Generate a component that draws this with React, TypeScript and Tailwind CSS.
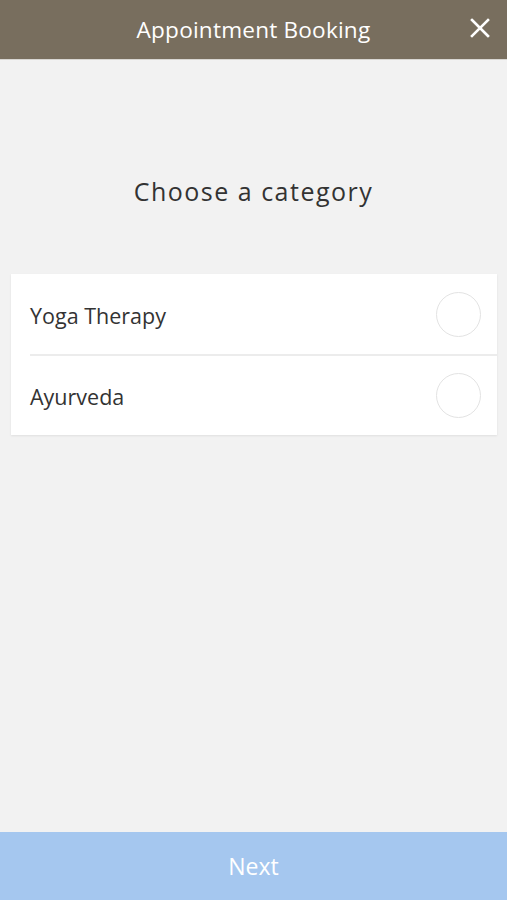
import React from "react";

export default function App() {
  const items = ["Yoga Therapy", "Ayurveda"];
  return (
    <div
      className="w-[507px] h-[900px] flex flex-col bg-[#f2f2f2]"
      style={{ fontFamily: '"Open Sans", sans-serif' }}
    >
      <div className="h-[60px] shrink-0 bg-[#786e5e] relative flex items-center justify-center border-b border-[#d8d6d2]">
        <span className="text-white text-[22.6px] leading-none tracking-[0.2px] pt-[1px]">Appointment Booking</span>
        <button className="absolute right-[16px] top-[17px] w-[22px] h-[22px] flex items-center justify-center">
          <svg width="20" height="20" viewBox="0 0 20 20" fill="none" stroke="white" strokeWidth="2.6" strokeLinecap="square">
            <path d="M2 2 L18 18 M18 2 L2 18" />
          </svg>
        </button>
      </div>
      <div className="flex-1 flex flex-col">
        <div className="h-[214px] flex items-center justify-center pt-[48px]">
          <span className="text-[#333333] text-[25px] leading-none tracking-[1.5px]">Choose a category</span>
        </div>
        <div className="ml-[11px] mr-[10px] bg-white shadow-[0_1px_2px_rgba(0,0,0,0.08)]">
          {items.map((it, i) => (
            <div key={it} className={`ml-[19px] flex items-center justify-between pr-[16px] ${i === 0 ? "h-[82px] border-b-2 border-[#ececec]" : "h-[79px]"}`}>
              <span className="text-[#333333] text-[21.5px] leading-none pt-[3px]">{it}</span>
              <div className="w-[45px] h-[45px] rounded-full border-[1.5px] border-[#e3e3e3]" />
            </div>
          ))}
        </div>
      </div>
      <div className="h-[68px] shrink-0 bg-[#a5c7ef] flex items-center justify-center">
        <span className="text-white text-[23px] leading-none">Next</span>
      </div>
    </div>
  );
}
